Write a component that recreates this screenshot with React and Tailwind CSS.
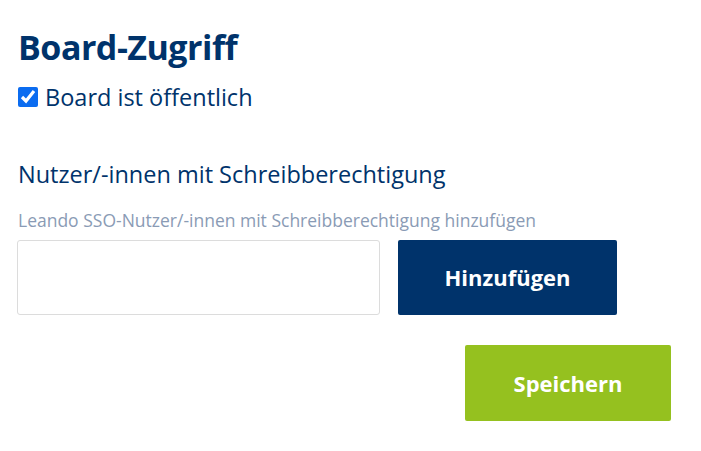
export default function App() {
  return (
    <div className="min-h-screen bg-white px-[18px] pt-[24px] font-['Open_Sans',sans-serif] text-[#00336b]">
      <h1 className="text-[34px] font-bold leading-[46px] tracking-[-0.5px]">Board-Zugriff</h1>

      <label className="mt-[12px] flex items-center gap-[7px] text-[23.5px] leading-[30px]">
        <input type="checkbox" defaultChecked className="h-[20px] w-[20px] accent-[#0b6cf0]" />
        <span>Board ist öffentlich</span>
      </label>

      <h2 className="mt-[46px] text-[23.5px] leading-[32px]">Nutzer/-innen mit Schreibberechtigung</h2>

      <p className="mt-[18px] text-[17.5px] leading-[24px] text-[#8a9bb5]">
        Leando SSO-Nutzer/-innen mit Schreibberechtigung hinzufügen
      </p>

      <div className="mt-[8px] flex items-stretch gap-[18px]">
        <input className="-ml-px h-[75px] w-[363px] rounded-[3px] border border-[#dcdcdc] bg-white px-3 outline-none" />
        <button className="h-[75px] w-[219px] rounded-[2px] bg-[#00336b] text-[22px] font-bold text-white">
          Hinzufügen
        </button>
      </div>

      <div className="mt-[30px] flex w-[653px] justify-end">
        <button className="h-[76px] w-[206px] rounded-[2px] bg-[#95c11f] text-[22px] font-bold text-white">
          Speichern
        </button>
      </div>
    </div>
  );
}
